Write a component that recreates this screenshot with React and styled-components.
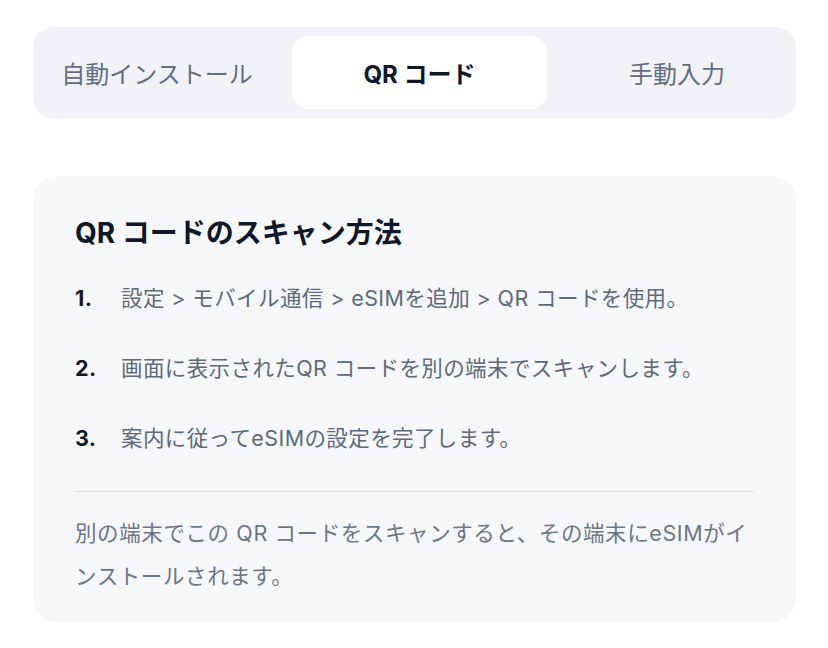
import React, { useState } from "react";
import styled, { createGlobalStyle } from "styled-components";

const GlobalStyle = createGlobalStyle`
  body {
    margin: 0;
    background: #ffffff;
    font-family: Inter, "Noto Sans CJK JP", "Noto Sans", sans-serif;
    -webkit-font-smoothing: antialiased;
  }
`;

const Page = styled.div`
  padding: 27px 32px 0 33px;
`;

const TabBar = styled.div`
  display: grid;
  grid-template-columns: 230px 255px 1fr;
  gap: 20px;
  padding: 9px;
  background: #f1f2f5;
  border-radius: 20px;
`;

const Tab = styled.button`
  height: 73px;
  border: none;
  border-radius: 16px;
  background: ${(p) => (p.$active ? "#ffffff" : "transparent")};
  color: ${(p) => (p.$active ? "#0f172a" : "#5f6e84")};
  font-family: inherit;
  font-size: 24px;
  font-weight: ${(p) => (p.$active ? 700 : 400)};
  cursor: pointer;
`;

const Card = styled.section`
  margin-top: 58px;
  padding: 37px 42px 24px;
  background: #f6f7f9;
  border-radius: 24px;
`;

const Title = styled.h2`
  margin: 0;
  font-size: 28px;
  line-height: 40px;
  font-weight: 700;
  color: #0f172a;
`;

const Steps = styled.ol`
  list-style: none;
  margin: 29px 0 0;
  padding: 0;
  display: flex;
  flex-direction: column;
  gap: 38px;
`;

const Step = styled.li`
  display: flex;
  align-items: center;
  font-size: 21.5px;
  line-height: 32px;
  letter-spacing: 0.4px;
`;

const StepNum = styled.span`
  width: 46px;
  flex: none;
  font-weight: 700;
  color: #111827;
`;

const StepText = styled.span`
  color: #5b6a80;
`;

const Divider = styled.hr`
  margin: 37px 0 0;
  border: none;
  border-top: 1.5px solid #dcdfe8;
`;

const Note = styled.p`
  margin: 20px 0 0;
  font-size: 21.5px;
  line-height: 43px;
  letter-spacing: 0.6px;
  color: #6b7688;
`;

const tabs = ["自動インストール", "QR コード", "手動入力"];

const steps = [
  "設定 > モバイル通信 > eSIMを追加 > QR コードを使用。",
  "画面に表示されたQR コードを別の端末でスキャンします。",
  "案内に従ってeSIMの設定を完了します。",
];

export default function App() {
  const [active, setActive] = useState(1);

  return (
    <>
      <GlobalStyle />
      <Page>
        <TabBar>
          {tabs.map((t, i) => (
            <Tab key={t} $active={i === active} onClick={() => setActive(i)}>
              {t}
            </Tab>
          ))}
        </TabBar>
        <Card>
          <Title>QR コードのスキャン方法</Title>
          <Steps>
            {steps.map((s, i) => (
              <Step key={i}>
                <StepNum>{i + 1}.</StepNum>
                <StepText>{s}</StepText>
              </Step>
            ))}
          </Steps>
          <Divider />
          <Note>
            別の端末でこの QR コードをスキャンすると、その端末にeSIMがインストールされます。
          </Note>
        </Card>
      </Page>
    </>
  );
}
